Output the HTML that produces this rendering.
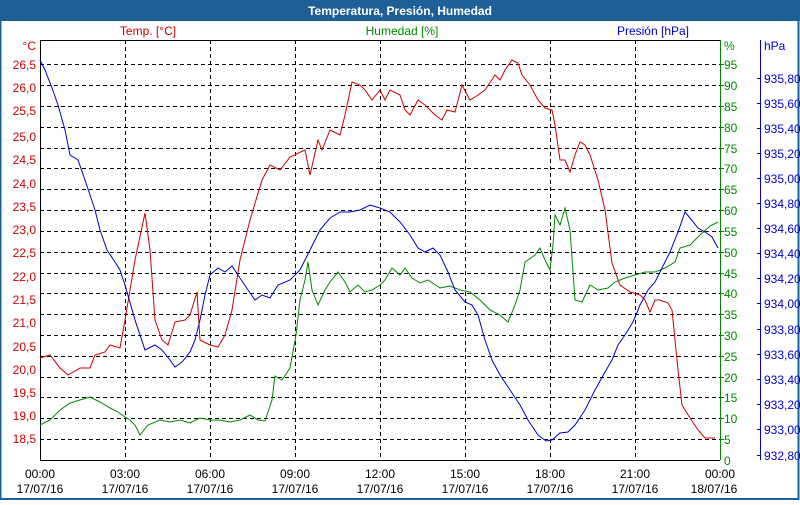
<!DOCTYPE html>
<html><head><meta charset="utf-8"><style>
body{margin:0;width:800px;height:500px;overflow:hidden;background:#fff;font-family:"Liberation Sans",sans-serif}
</style></head><body>
<svg width="800" height="500" xmlns="http://www.w3.org/2000/svg" font-family="Liberation Sans, sans-serif" font-size="12">
<rect x="0" y="0" width="800" height="500" fill="#fff"/>
<rect x="0" y="0" width="800" height="21" fill="#1f5f98"/>
<rect x="0.5" y="20" width="798" height="479" fill="none" stroke="#1f5f98" stroke-width="2"/>
<text x="400" y="15" text-anchor="middle" fill="#fff" font-weight="bold" font-size="12">Temperatura, Presión, Humedad</text>
<text x="148" y="35" text-anchor="middle" fill="#c00">Temp. [°C]</text>
<text x="402" y="35" text-anchor="middle" fill="#080">Humedad [%]</text>
<text x="653" y="35" text-anchor="middle" fill="#00c">Presión [hPa]</text>
<g stroke="#000" stroke-dasharray="4,3" stroke-width="1">
<path d="M125.5 40V460M210.5 40V460M295.5 40V460M380.5 40V460M465.5 40V460M550.5 40V460M635.5 40V460"/>
<path d="M40 64.5H720M40 85.5H720M40 106.5H720M40 127.5H720M40 148.5H720M40 168.5H720M40 189.5H720M40 210.5H720M40 231.5H720M40 252.5H720M40 273.5H720M40 293.5H720M40 314.5H720M40 335.5H720M40 356.5H720M40 377.5H720M40 397.5H720M40 418.5H720M40 439.5H720"/>
</g>
<path d="M40.5 460V40.5H720" fill="none" stroke="#000"/>
<path d="M40 460.5H720" stroke="#000"/>
<path d="M720.5 40V460" stroke="#080"/>
<path d="M760.5 40V460" stroke="#00c"/>
<g fill="#c00" text-anchor="end">
<text x="36" y="50">°C</text>
<text x="36" y="69">26,5</text><text x="36" y="92">26,0</text><text x="36" y="115">25,5</text><text x="36" y="141">25,0</text><text x="36" y="164">24,5</text><text x="36" y="188">24,0</text><text x="36" y="211">23,5</text><text x="36" y="234">23,0</text><text x="36" y="257">22,5</text><text x="36" y="281">22,0</text><text x="36" y="304">21,5</text><text x="36" y="327">21,0</text><text x="36" y="351">20,5</text><text x="36" y="374">20,0</text><text x="36" y="397">19,5</text><text x="36" y="420">19,0</text><text x="36" y="443">18,5</text>
</g>
<g fill="#080">
<text x="724" y="50">%</text>
<text x="724" y="69">95</text><text x="724" y="90">90</text><text x="724" y="111">85</text><text x="724" y="132">80</text><text x="724" y="153">75</text><text x="724" y="173">70</text><text x="724" y="194">65</text><text x="724" y="215">60</text><text x="724" y="236">55</text><text x="724" y="257">50</text><text x="724" y="278">45</text><text x="724" y="298">40</text><text x="724" y="319">35</text><text x="724" y="340">30</text><text x="724" y="361">25</text><text x="724" y="382">20</text><text x="724" y="402">15</text><text x="724" y="423">10</text><text x="724" y="444">5</text><text x="724" y="465">0</text>
</g>
<g stroke="#080"><path d="M720 64.5h4M720 85.5h4M720 106.5h4M720 127.5h4M720 148.5h4M720 168.5h4M720 189.5h4M720 210.5h4M720 231.5h4M720 252.5h4M720 273.5h4M720 293.5h4M720 314.5h4M720 335.5h4M720 356.5h4M720 377.5h4M720 397.5h4M720 418.5h4M720 439.5h4"/></g>
<g fill="#00c">
<text x="764" y="50">hPa</text>
<text x="764" y="83">935,80</text><text x="764" y="108">935,60</text><text x="764" y="133">935,40</text><text x="764" y="158">935,20</text><text x="764" y="183">935,00</text><text x="764" y="208">934,80</text><text x="764" y="233">934,60</text><text x="764" y="258">934,40</text><text x="764" y="283">934,20</text><text x="764" y="308">934,00</text><text x="764" y="334">933,80</text><text x="764" y="359">933,60</text><text x="764" y="384">933,40</text><text x="764" y="409">933,20</text><text x="764" y="434">933,00</text><text x="764" y="460">932,80</text>
</g>
<g stroke="#00c"><path d="M757 78.5h3M757 103.5h3M757 128.5h3M757 153.5h3M757 178.5h3M757 203.5h3M757 228.5h3M757 253.5h3M757 278.5h3M757 303.5h3M757 329.5h3M757 354.5h3M757 379.5h3M757 404.5h3M757 429.5h3M757 455.5h3"/></g>
<g fill="#000" text-anchor="middle">
<text x="40" y="478">00:00</text><text x="40" y="493">17/07/16</text>
<text x="125" y="478">03:00</text><text x="125" y="493">17/07/16</text>
<text x="210" y="478">06:00</text><text x="210" y="493">17/07/16</text>
<text x="295" y="478">09:00</text><text x="295" y="493">17/07/16</text>
<text x="380" y="478">12:00</text><text x="380" y="493">17/07/16</text>
<text x="465" y="478">15:00</text><text x="465" y="493">17/07/16</text>
<text x="550" y="478">18:00</text><text x="550" y="493">17/07/16</text>
<text x="635" y="478">21:00</text><text x="635" y="493">17/07/16</text>
<text x="720" y="478">00:00</text><text x="714" y="493">18/07/16</text>
</g>
<g fill="none" stroke-width="1">
<polyline stroke="#c00" points="40,358 50,355 60,368 68,375 80,368 90,368 95,355 105,352 110,345 120,348 125,320 135,260 145,213 150,250 155,320 162,340 168,345 175,322 185,320 190,315 197,292 200,340 210,345 218,347 225,335 232,310 240,260 250,220 262,180 270,165 280,170 290,157 305,150 310,175 318,140 322,150 330,130 340,135 345,115 352,82 360,85 365,90 372,100 380,90 385,100 390,90 400,95 405,110 410,115 418,100 425,105 435,115 442,120 447,110 455,112 462,85 470,100 478,95 485,90 495,75 500,80 505,70 512,60 518,63 522,75 530,85 538,100 545,108 552,110 555,125 560,160 565,160 570,172 575,155 580,142 585,145 590,155 598,180 605,210 612,263 620,285 630,292 640,295 645,300 650,312 655,300 660,300 668,303 672,310 678,370 682,405 690,418 698,430 705,438 715,438"/>
<polyline stroke="#080" points="40,425 50,420 60,410 70,403 80,400 90,397 100,402 110,408 118,412 125,417 130,420 135,425 140,435 148,425 160,420 170,422 180,420 190,423 200,418 210,420 220,420 230,422 240,420 250,415 258,420 265,421 272,400 275,376 282,380 290,368 296,335 300,300 305,280 308,262 312,290 318,305 325,290 330,282 338,272 345,282 350,292 358,285 365,292 372,290 380,285 385,280 392,268 400,275 405,268 412,278 420,283 428,280 440,288 450,286 460,290 470,292 480,300 490,310 500,315 508,322 515,305 520,290 525,262 535,255 540,248 545,260 550,270 553,245 555,215 560,225 565,208 570,230 575,300 582,302 590,285 598,290 608,288 615,282 625,278 635,275 645,272 655,272 665,268 675,262 680,248 690,245 700,235 710,226 718,222"/>
<polyline stroke="#00c" points="40,60 45,70 52,88 58,105 65,130 70,155 78,160 85,180 90,195 95,210 100,230 107,250 115,262 120,270 125,285 135,320 145,350 155,345 162,350 170,360 175,367 182,362 190,352 195,340 200,320 205,295 210,275 218,268 225,272 232,266 240,278 248,290 255,300 262,295 270,298 278,285 290,280 300,270 310,250 320,230 330,218 340,212 350,212 360,210 370,205 380,208 390,212 400,222 410,235 418,248 425,252 433,248 440,255 448,272 455,290 465,302 472,305 478,315 485,340 492,360 500,375 510,390 520,405 528,420 538,435 546,441 552,440 560,433 568,432 575,425 585,410 595,390 605,372 612,360 618,345 625,335 633,322 640,305 648,290 655,282 662,268 670,252 678,232 685,212 690,218 698,228 705,232 712,237 718,248"/>
</g>
</svg>
</body></html>
